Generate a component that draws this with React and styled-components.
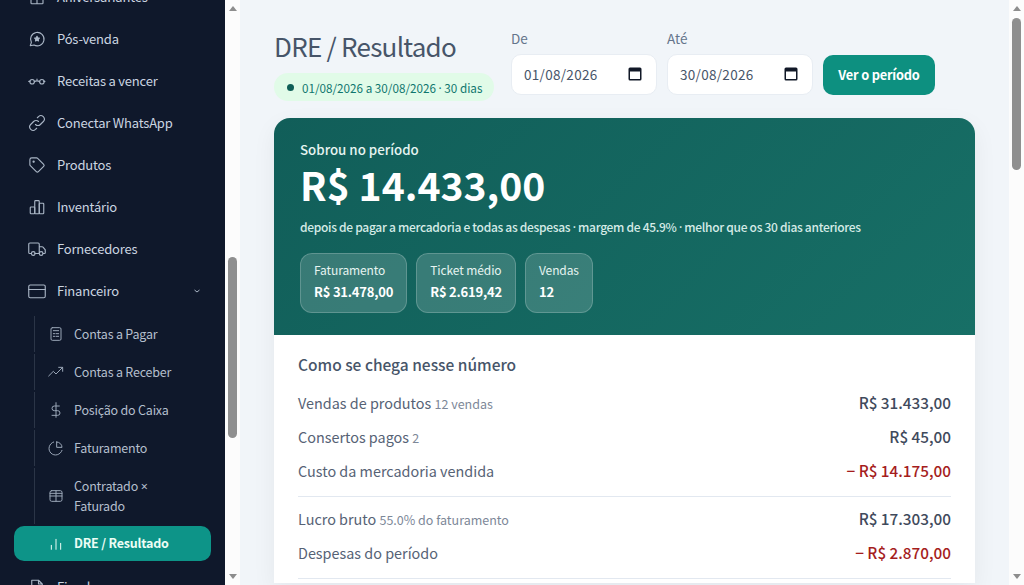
import React from 'react';
import styled, { createGlobalStyle } from 'styled-components';

const GlobalStyle = createGlobalStyle`
  html, body { margin: 0; padding: 0; height: 100%; overflow: hidden; }
  body { font-family: "Noto Sans CJK KR", "Noto Sans", sans-serif; background: #f1f5f9; }
  * { box-sizing: border-box; }
`;

const Shell = styled.div`
  display: flex;
  height: 100vh;
  overflow: hidden;
`;

const Sidebar = styled.aside`
  width: 225px;
  flex: none;
  height: 100vh;
  overflow: hidden;
  background: #0f182b;
`;

// the list is shown scrolled, so its first row is cut by the top edge
const Nav = styled.nav`
  display: flex;
  flex-direction: column;
  margin-top: -24px;
  padding: 0 14px;
`;

const NavItem = styled.div`
  display: flex;
  flex: none;
  align-items: center;
  height: 42px;
  padding: 0 0 2px 14px;
  gap: 11px;
  font-size: 13px;
  letter-spacing: -0.2px;
  line-height: 19px;
  color: #cbd5e1;
  svg { flex: none; margin-top: 2px; color: #aab6c6; }
`;

const Caret = styled.svg`
  margin-left: auto;
  margin-right: 9px;
`;

const SubList = styled.div`
  display: flex;
  flex: none;
  flex-direction: column;
  gap: 2px;
  margin-top: 4px;
  margin-bottom: 5px;
`;

const SubItem = styled.div`
  display: flex;
  align-items: center;
  gap: 10px;
  min-height: ${p => (p.$tall ? '56px' : '36px')};
  margin-left: 20px;
  padding: 0 16px 2px 13px;
  border-left: 1px solid #2b3547;
  font-size: 12.5px;
  letter-spacing: -0.2px;
  line-height: 19px;
  color: #b4bfcd;
  svg { flex: none; margin-top: 2px; color: #9aa6b7; }
`;

const ActiveSubItem = styled(SubItem)`
  margin-left: 0;
  padding-left: 34px;
  min-height: 35px;
  border-left: 0;
  border-radius: 10px;
  background: #0d9488;
  color: #ecfdf5;
  font-weight: 700;
  svg { color: #ecfdf5; }
`;

const Rail = styled.div`
  display: flex;
  flex: none;
  flex-direction: column;
  align-items: center;
  width: 15px;
  height: 100vh;
  background: #fcfcfc;
`;

const RailArrow = styled.div`
  flex: none;
  width: 0;
  height: 0;
  margin: ${p => (p.$down ? '0 0 6px' : '6px 0 0')};
  border-left: 4.5px solid transparent;
  border-right: 4.5px solid transparent;
  ${p => (p.$down ? 'border-top: 5px solid #8d8d8d;' : 'border-bottom: 5px solid #8d8d8d;')}
`;

const RailTrack = styled.div`
  flex: 1;
  width: 100%;
  display: flex;
  flex-direction: column;
  align-items: center;
`;

const RailThumb = styled.div`
  width: 9px;
  margin-top: ${p => p.$top}px;
  height: ${p => p.$size}px;
  border-radius: 5px;
  background: #8f8f8f;
`;

const Main = styled.main`
  flex: 1;
  min-width: 0;
  height: 100vh;
  overflow: hidden;
  padding: 19px 34px 0;
  background: #f1f5f9;
`;

const Header = styled.header`
  display: flex;
  align-items: flex-start;
  gap: 17px;
  margin-bottom: 17px;
`;

const TitleBlock = styled.div`
  display: flex;
  flex-direction: column;
  align-items: flex-start;
  padding-top: 8px;
`;

const Title = styled.h1`
  margin: 0 0 8px;
  font-size: 26px;
  letter-spacing: -0.75px;
  line-height: 38px;
  font-weight: 400;
  color: #475569;
`;

const Pill = styled.div`
  display: flex;
  align-items: center;
  gap: 8px;
  width: 220px;
  height: 28px;
  padding: 0 0 0 13px;
  border-radius: 14px;
  background: #e1fbe8;
  color: #0f766e;
  font-size: 11.7px;
`;

const Dot = styled.span`
  width: 7px;
  height: 7px;
  border-radius: 50%;
  background: #0f5f57;
`;

// the CJK face draws · and × wide, these take them from a Latin face
const Glyph = styled.span`
  font-family: "Noto Sans", sans-serif;
`;

const Filters = styled.div`
  display: flex;
  align-items: flex-end;
  gap: 10px;
  margin-top: 9px;
`;

const Field = styled.label`
  display: flex;
  flex-direction: column;
  gap: 6px;
  font-size: 13.5px;
  line-height: 20px;
  color: #64748b;
`;

const DateBox = styled.div`
  display: flex;
  align-items: center;
  width: 146px;
  height: 41px;
  padding: 0 14px 2px 12px;
  border: 1px solid #e8edf3;
  border-radius: 10px;
  background: #fff;
`;

const DateInput = styled.input`
  flex: 1;
  min-width: 0;
  border: 0;
  outline: 0;
  padding: 0;
  background: none;
  font: inherit;
  font-size: 13.5px;
  letter-spacing: 0.3px;
  color: #475569;
`;

const PeriodButton = styled.button`
  height: 40px;
  width: 112px;
  padding: 0 0 2px;
  border: 0;
  border-radius: 10px;
  background: #0d9080;
  color: #fff;
  font: inherit;
  font-size: 12.8px;
  letter-spacing: -0.2px;
  font-weight: 700;
`;

const Panel = styled.section`
  border-radius: 16px 16px 0 0;
  overflow: hidden;
  background: #fff;
  box-shadow: 0 8px 24px rgba(15, 23, 42, 0.06);
`;

const Hero = styled.div`
  height: 217px;
  padding: 22px 26px 0;
  background: linear-gradient(135deg, #115e59, #176f66);
  color: #fff;
`;

const HeroLabel = styled.div`
  font-size: 13.3px;
  line-height: 20px;
  font-weight: 500;
  color: #e6f4f1;
`;

const HeroValue = styled.div`
  font-size: 39.1px;
  line-height: 48px;
  font-weight: 700;
`;

const HeroNote = styled.div`
  margin-top: 10px;
  font-size: 12px;
  letter-spacing: -0.3px;
  line-height: 18px;
  font-weight: 500;
  color: #d5ebe7;
`;

const Chips = styled.div`
  display: flex;
  gap: 9px;
  margin-top: 16px;
`;

const Chip = styled.div`
  display: flex;
  flex-direction: column;
  justify-content: center;
  gap: 3px;
  height: 60px;
  padding: 0 13px 4px;
  border: 1px solid rgba(255, 255, 255, 0.2);
  border-radius: 12px;
  background: rgba(255, 255, 255, 0.16);
`;

const ChipLabel = styled.div`
  font-size: 12px;
  letter-spacing: -0.1px;
  line-height: 18px;
  color: #e6f4f1;
`;

const ChipValue = styled.div`
  font-size: 13px;
  letter-spacing: -0.2px;
  line-height: 19px;
  font-weight: 700;
`;

const Breakdown = styled.div`
  padding: 17px 24px 0;
`;

const BreakdownTitle = styled.h2`
  margin: 0 0 9px;
  font-size: 15.5px;
  line-height: 24px;
  font-weight: 500;
  color: #475569;
`;

const Row = styled.div`
  display: flex;
  align-items: center;
  justify-content: space-between;
  height: 34px;
  font-size: 14.4px;
  color: #566275;
`;

const RowNote = styled.small`
  font-size: 12.5px;
  color: #7d8898;
`;

const RowValue = styled.span`
  font-size: 15.3px;
  font-weight: 500;
  color: ${p => (p.$negative ? '#a51d1d' : '#3f4a5c')};
`;

const Divider = styled.hr`
  margin: 9px 0 4px;
  border: 0;
  border-top: 1px solid #e2e8f0;
`;

const Icon = ({ size = 18, width = 1.5, children }) => (
  <svg width={size} height={size} viewBox="0 0 24 24" fill="none" stroke="currentColor" strokeWidth={width} strokeLinecap="round" strokeLinejoin="round">
    {children}
  </svg>
);

const icons = {
  gift: (
    <Icon>
      <rect x="3" y="8" width="18" height="5" rx="1" />
      <path d="M4 13v7a1 1 0 0 0 1 1h14a1 1 0 0 0 1-1v-7M12 8v13" />
    </Icon>
  ),
  chat: (
    <Icon>
      <path d="M3 21l1.500-4.500A9 9 0 1 1 8 20Z" />
      <path d="M12 8.500l1 2 2.200.3-1.600 1.500.4 2.200-2-1-2 1 .4-2.200-1.600-1.500 2.200-.3Z" fill="currentColor" />
    </Icon>
  ),
  glasses: (
    <Icon>
      <circle cx="5.500" cy="13" r="3" />
      <circle cx="18.500" cy="13" r="3" />
      <path d="M8.500 13c1.500-1.500 5.500-1.500 7 0M12 9.500v1.500M2.500 12.500H1M22.500 12.500H21" />
    </Icon>
  ),
  link: (
    <Icon>
      <path d="M10 14a4.500 4.500 0 0 0 6.500 0l4-4a4.600 4.600 0 0 0-6.500-6.500l-1.500 1.500" />
      <path d="M14 10a4.500 4.500 0 0 0-6.500 0l-4 4a4.600 4.600 0 0 0 6.500 6.500l1.500-1.500" />
    </Icon>
  ),
  tag: (
    <Icon>
      <path d="M2.500 5v6.500a2 2 0 0 0 .6 1.400l8 8a2 2 0 0 0 2.800 0l7-7a2 2 0 0 0 0-2.800l-8-8a2 2 0 0 0-1.400-.6H5a2.500 2.500 0 0 0-2.500 2.500Z" />
      <circle cx="7.500" cy="7.500" r=".8" fill="currentColor" />
    </Icon>
  ),
  bars: (
    <Icon>
      <rect x="3" y="12" width="6" height="9" rx="1" />
      <rect x="9" y="3.500" width="6" height="17.500" rx="1" />
      <rect x="15" y="7" width="6" height="14" rx="1" />
    </Icon>
  ),
  truck: (
    <Icon>
      <path d="M4.500 18H2.500A1.500 1.500 0 0 1 1 16.500v-11A1.500 1.500 0 0 1 2.500 4h11A1.500 1.500 0 0 1 15 5.500V18M9 18h6M20 18h2a1 1 0 0 0 1-1v-3.500a1 1 0 0 0-.2-.6L20 9.500a1.500 1.500 0 0 0-1.200-.5H15" />
      <circle cx="7" cy="18" r="2.500" />
      <circle cx="17.500" cy="18" r="2.500" />
    </Icon>
  ),
  card: (
    <Icon>
      <rect x="1" y="4" width="22" height="17" rx="2" />
      <path d="M1 10h22" />
    </Icon>
  ),
  file: (
    <Icon>
      <path d="M5 3h9l5 5v13H5ZM14 3v5h5" />
    </Icon>
  ),
  receipt: (
    <Icon size={16}>
      <rect x="4.500" y="2.500" width="15" height="19" rx="2" />
      <path d="M8 7h8M8 11.500h2M12 11.500h4M8 15.500h2M12 15.500h4" />
    </Icon>
  ),
  trend: (
    <Icon size={16}>
      <path d="M1 18l7-7 4 4 10-10M16 5h6v6" />
    </Icon>
  ),
  dollar: (
    <Icon size={16}>
      <path d="M12 1v22M17 6H9.500a3.500 3.500 0 0 0 0 7h5a3.500 3.500 0 0 1 0 7H6" />
    </Icon>
  ),
  pie: (
    <Icon size={16}>
      <path d="M21 15.500A10 10 0 1 1 8.500 3" />
      <path d="M13 3v8h8a8 8 0 0 0-8-8Z" />
    </Icon>
  ),
  table: (
    <Icon size={16}>
      <rect x="3" y="4" width="18" height="16" rx="2.500" />
      <path d="M3 12h18M12 4v16M3 8h18" />
    </Icon>
  ),
  chart: (
    <Icon size={16}>
      <path d="M5 20v-6M12 20V5M19 20v-9" />
    </Icon>
  )
};

const CalendarIcon = () => (
  <svg width="14" height="15" viewBox="0 0 14 15">
    <path fillRule="evenodd" fill="#111827" d="M2 1.500h10a1.500 1.500 0 0 1 1.500 1.500v10a1.500 1.500 0 0 1-1.500 1.500H2A1.500 1.500 0 0 1 .5 13V3A1.500 1.500 0 0 1 2 1.500ZM2 5.500V13h10V5.500Z" />
  </svg>
);

const ScrollRail = ({ top, size }) => (
  <Rail>
    <RailArrow />
    <RailTrack>
      <RailThumb $top={top} $size={size} />
    </RailTrack>
    <RailArrow $down />
  </Rail>
);

const mainLinks = [
  { icon: icons.gift, label: 'Aniversariantes' },
  { icon: icons.chat, label: 'Pós-venda' },
  { icon: icons.glasses, label: 'Receitas a vencer' },
  { icon: icons.link, label: 'Conectar WhatsApp' },
  { icon: icons.tag, label: 'Produtos' },
  { icon: icons.bars, label: 'Inventário' },
  { icon: icons.truck, label: 'Fornecedores' }
];

const subLinks = [
  { icon: icons.receipt, label: 'Contas a Pagar' },
  { icon: icons.trend, label: 'Contas a Receber' },
  { icon: icons.dollar, label: 'Posição do Caixa' },
  { icon: icons.pie, label: 'Faturamento' },
  { icon: icons.table, label: <>Contratado <Glyph>×</Glyph> Faturado</>, tall: true }
];

export default function App() {
  return (
    <Shell>
      <GlobalStyle />
      <Sidebar>
        <Nav>
          {mainLinks.map(link => (
            <NavItem key={link.label}>
              {link.icon}
              {link.label}
            </NavItem>
          ))}
          <NavItem>
            {icons.card}
            Financeiro
            <Caret width="10" height="10" viewBox="0 0 10 10" fill="none" stroke="currentColor" strokeWidth="1">
              <path d="M2.500 4l2.500 2 2.500-2" />
            </Caret>
          </NavItem>
          <SubList>
            {subLinks.map((link, i) => (
              <SubItem key={i} $tall={link.tall}>
                {link.icon}
                <span>{link.label}</span>
              </SubItem>
            ))}
            <ActiveSubItem>
              {icons.chart}
              DRE / Resultado
            </ActiveSubItem>
          </SubList>
          <NavItem>
            {icons.file}
            Fiscal
          </NavItem>
        </Nav>
      </Sidebar>
      <ScrollRail top={246} size={181} />
      <Main>
        <Header>
          <TitleBlock>
            <Title>DRE / Resultado</Title>
            <Pill>
              <Dot />
              <span>01/08/2026 a 30/08/2026 <Glyph>·</Glyph> 30 dias</span>
            </Pill>
          </TitleBlock>
          <Filters>
            <Field>
              De
              <DateBox>
                <DateInput readOnly value="01/08/2026" />
                <CalendarIcon />
              </DateBox>
            </Field>
            <Field>
              Até
              <DateBox>
                <DateInput readOnly value="30/08/2026" />
                <CalendarIcon />
              </DateBox>
            </Field>
            <PeriodButton>Ver o período</PeriodButton>
          </Filters>
        </Header>
        <Panel>
          <Hero>
            <HeroLabel>Sobrou no período</HeroLabel>
            <HeroValue>R$ 14.433,00</HeroValue>
            <HeroNote>depois de pagar a mercadoria e todas as despesas <Glyph>·</Glyph> margem de 45.9% <Glyph>·</Glyph> melhor que os 30 dias anteriores</HeroNote>
            <Chips>
              <Chip>
                <ChipLabel>Faturamento</ChipLabel>
                <ChipValue>R$ 31.478,00</ChipValue>
              </Chip>
              <Chip>
                <ChipLabel>Ticket médio</ChipLabel>
                <ChipValue>R$ 2.619,42</ChipValue>
              </Chip>
              <Chip>
                <ChipLabel>Vendas</ChipLabel>
                <ChipValue>12</ChipValue>
              </Chip>
            </Chips>
          </Hero>
          <Breakdown>
            <BreakdownTitle>Como se chega nesse número</BreakdownTitle>
            <Row>
              <span>Vendas de produtos <RowNote>12 vendas</RowNote></span>
              <RowValue>R$ 31.433,00</RowValue>
            </Row>
            <Row>
              <span>Consertos pagos <RowNote>2</RowNote></span>
              <RowValue>R$ 45,00</RowValue>
            </Row>
            <Row>
              <span>Custo da mercadoria vendida</span>
              <RowValue $negative>− R$ 14.175,00</RowValue>
            </Row>
            <Divider />
            <Row>
              <span>Lucro bruto <RowNote>55.0% do faturamento</RowNote></span>
              <RowValue>R$ 17.303,00</RowValue>
            </Row>
            <Row>
              <span>Despesas do período</span>
              <RowValue $negative>− R$ 2.870,00</RowValue>
            </Row>
            <Divider />
          </Breakdown>
        </Panel>
      </Main>
      <ScrollRail top={7} size={152} />
    </Shell>
  );
}
